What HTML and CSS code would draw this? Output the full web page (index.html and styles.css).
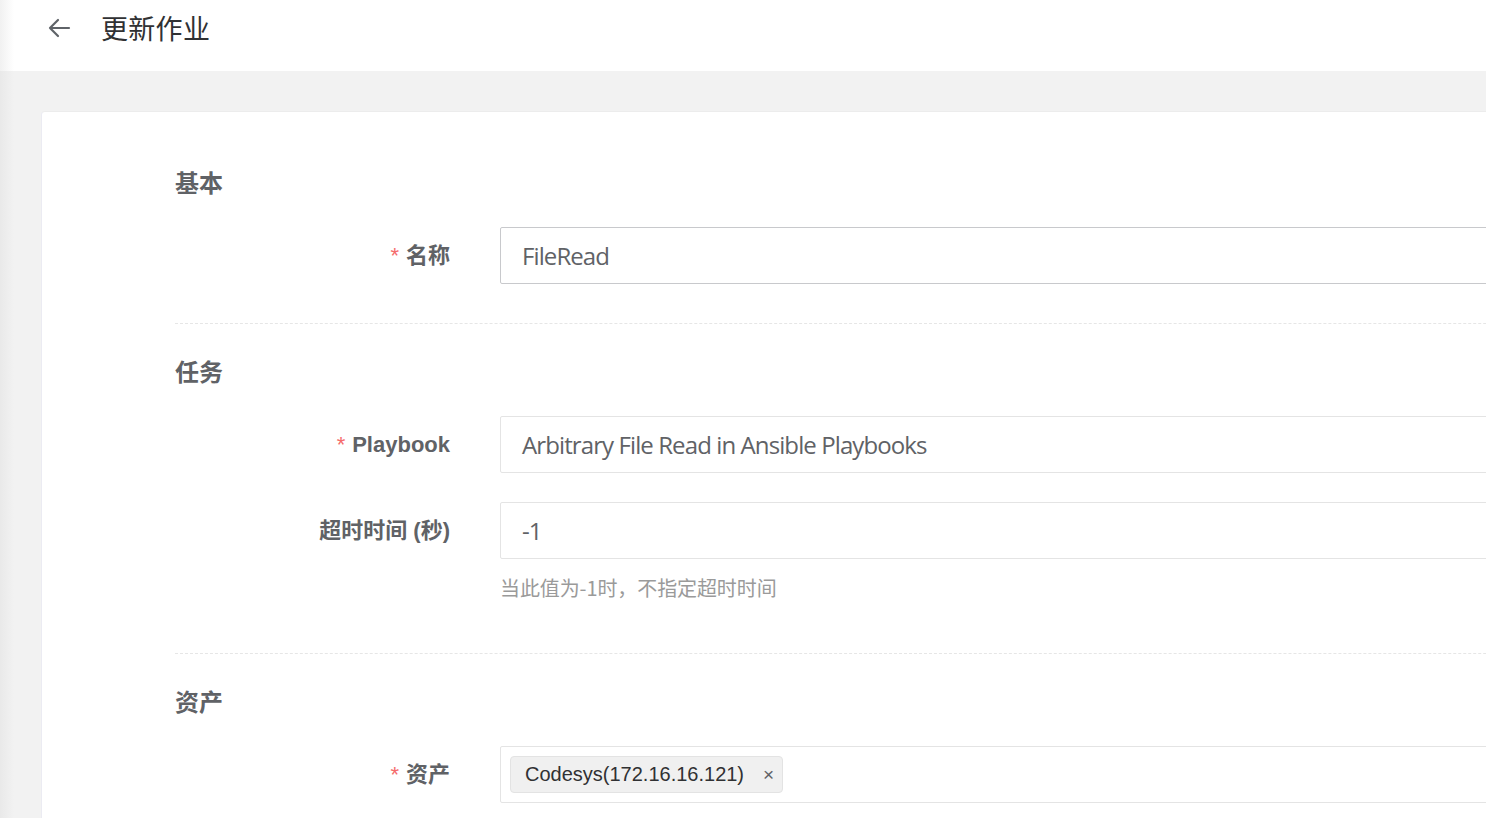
FILE: index.html
```html
<!DOCTYPE html>
<html lang="zh">
<head>
<meta charset="utf-8">
<link rel="stylesheet" href="styles.css">
</head>
<body>
<header class="topbar">
  <svg class="back" width="24" height="20" viewBox="0 0 24 20"><path d="M22 10H3M11 2L3 10l8 8" fill="none" stroke="#5f6368" stroke-width="2.2" stroke-linecap="round" stroke-linejoin="round"/></svg>
  <h1 class="title">更新作业</h1>
</header>
<main class="page">
  <div class="card">
    <section class="section">
      <h2 class="sec-title">基本</h2>
      <div class="row">
        <label class="label"><span class="req">*</span>名称</label>
        <div class="field"><div class="input strong">FileRead</div></div>
      </div>
    </section>
    <div class="divider"></div>
    <section class="section">
      <h2 class="sec-title">任务</h2>
      <div class="row">
        <label class="label"><span class="req">*</span>Playbook</label>
        <div class="field"><div class="input">Arbitrary File Read in Ansible Playbooks</div></div>
      </div>
      <div class="row row-gap">
        <label class="label">超时时间 (秒)</label>
        <div class="field">
          <div class="input">-1</div>
          <div class="help">当此值为-1时，不指定超时时间</div>
        </div>
      </div>
    </section>
    <div class="divider d2"></div>
    <section class="section">
      <h2 class="sec-title">资产</h2>
      <div class="row">
        <label class="label"><span class="req">*</span>资产</label>
        <div class="field"><div class="input tags"><span class="tag">Codesys(172.16.16.121)<span class="x">×</span></span></div></div>
      </div>
    </section>
  </div>
</main>
</body>
</html>
```
FILE: styles.css
```css
html, body { margin: 0; padding: 0; }
body {
  width: 1486px;
  height: 818px;
  overflow: hidden;
  background: linear-gradient(to right, #e9e9e9, #f2f2f2 14px);
  font-family: "Noto Sans", "Noto Sans CJK SC", sans-serif;
  color: #606266;
}
.topbar {
  height: 71px;
  display: flex;
  align-items: center;
  background: linear-gradient(to right, #f1f1f1, #ffffff 14px);
}
.back { margin-left: 47px; margin-top: -16px; }
.title {
  margin: -16px 0 0 30px;
  font-family: "Noto Sans CJK SC", sans-serif;
  font-weight: 400;
  font-size: 27px;
  color: #303133;
  letter-spacing: 0.3px;
}
.page {
  padding: 40px 0 0 41px;
}
.card {
  width: 1600px;
  height: 800px;
  background: #fff;
  border-left: 1px solid #ebebf2;
  border-top: 1px solid #ececec;
  border-radius: 4px 0 0 0;
  padding: 52px 0 0 133px;
  box-sizing: border-box;
}
.sec-title {
  margin: 0 0 27px 0;
  height: 36px;
  line-height: 36px;
  font-family: "Noto Sans CJK SC", sans-serif;
  font-size: 24px;
  font-weight: 700;
  color: #606266;
}
.row {
  display: flex;
  align-items: flex-start;
}
.row-gap { margin-top: 29px; }
.label {
  width: 275px;
  flex: none;
  height: 57px;
  line-height: 58px;
  text-align: right;
  font-family: "Liberation Sans", "Noto Sans CJK SC", sans-serif;
  font-weight: 700;
  font-size: 22px;
  color: #606266;
}
.req { color: #f56c6c; margin-right: 7px; font-weight: 400; font-size: 22px; }
.field { margin-left: 50px; }
.input {
  width: 1100px;
  height: 57px;
  box-sizing: border-box;
  border: 1px solid #e4e4e4;
  border-radius: 2px;
  padding-left: 21px;
  display: flex;
  align-items: center;
  font-family: "Open Sans", "Noto Sans CJK SC", sans-serif;
  font-size: 24px;
  color: #606266;
  letter-spacing: -0.9px;
}
.input.strong { border-color: #c8c9cc; }
.help {
  margin-top: 15px;
  line-height: 28px;
  font-family: "Noto Sans CJK SC", sans-serif;
  font-size: 20px;
  color: #9a9a9a;
  letter-spacing: -0.1px;
}
.divider {
  height: 0;
  border-top: 1px dashed #e6e6e6;
  margin: 39px 0 29px 0;
}
.divider.d2 { margin-top: 51px; }
.tags { padding-left: 9px; }
.tag {
  display: inline-flex;
  align-items: center;
  height: 37px;
  box-sizing: border-box;
  padding: 0 8px 0 14px;
  background: #f0f0f0;
  border: 1px solid #e3e3e3;
  border-radius: 4px;
  font-family: "Liberation Sans", sans-serif;
  font-size: 20px;
  letter-spacing: 0;
  color: #303133;
}
.x { margin-left: 19px; font-size: 19px; color: #606266; }
```
